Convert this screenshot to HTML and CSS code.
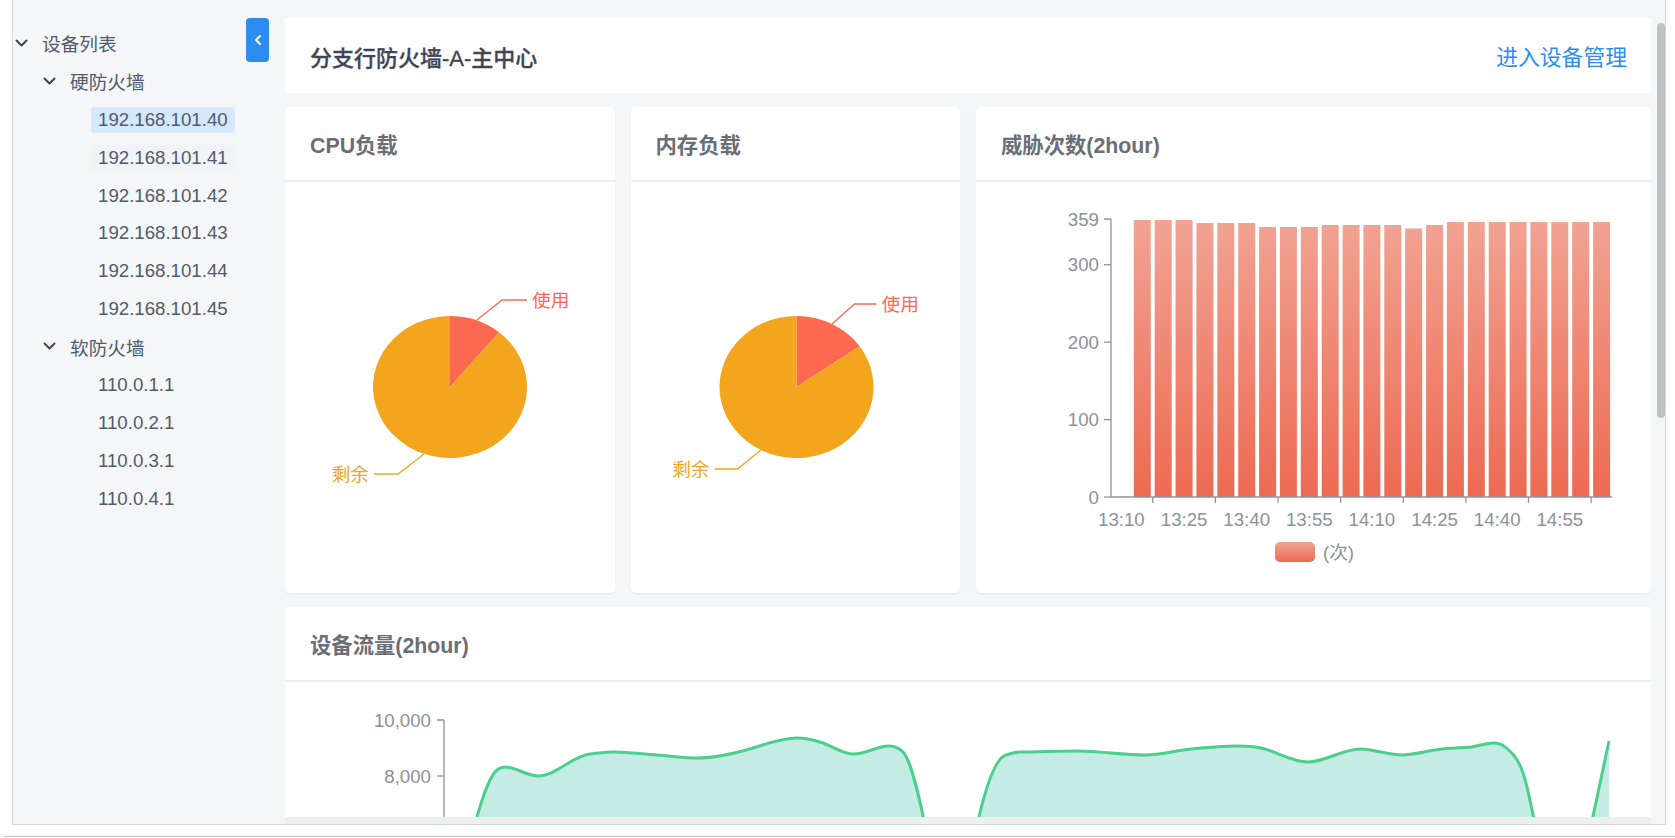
FILE: index.html
```html
<!DOCTYPE html>
<html lang="zh-CN">
<head>
<meta charset="utf-8">
<title>设备监控</title>
<link rel="stylesheet" href="styles.css">
</head>
<body>
<div class="frame">
  <aside class="sidebar">
    <button class="collapse" type="button" aria-label="收起">
      <svg width="8" height="12" viewBox="0 0 8 12"><polyline points="6,2 2,6 6,10"/></svg>
    </button>
    <ul class="tree">
      <li class="node lvl1"><svg class="arrow" viewBox="0 0 13 8"><polyline points="1.5,1.5 6.5,6.5 11.5,1.5"/></svg><span class="label">设备列表</span></li>
      <li class="node lvl2"><svg class="arrow" viewBox="0 0 13 8"><polyline points="1.5,1.5 6.5,6.5 11.5,1.5"/></svg><span class="label">硬防火墙</span></li>
      <li class="node lvl3 selected"><span class="label">192.168.101.40</span></li>
      <li class="node lvl3 hovered"><span class="label">192.168.101.41</span></li>
      <li class="node lvl3"><span class="label">192.168.101.42</span></li>
      <li class="node lvl3"><span class="label">192.168.101.43</span></li>
      <li class="node lvl3"><span class="label">192.168.101.44</span></li>
      <li class="node lvl3"><span class="label">192.168.101.45</span></li>
      <li class="node lvl2"><svg class="arrow" viewBox="0 0 13 8"><polyline points="1.5,1.5 6.5,6.5 11.5,1.5"/></svg><span class="label">软防火墙</span></li>
      <li class="node lvl3"><span class="label">110.0.1.1</span></li>
      <li class="node lvl3"><span class="label">110.0.2.1</span></li>
      <li class="node lvl3"><span class="label">110.0.3.1</span></li>
      <li class="node lvl3"><span class="label">110.0.4.1</span></li>
    </ul>
  </aside>

  <div class="main-col">
    <main class="main">
      <section class="card head-card">
        <h1 class="page-title">分支行防火墙-A-主中心</h1>
        <a class="manage-link" href="#">进入设备管理</a>
      </section>

      <div class="row2">
        <section class="card chart-card quarter">
          <header class="card-head">CPU负载</header>
          <div class="card-body">
            <svg class="chart" viewBox="285 182 329.5 411" preserveAspectRatio="none">
              <path class="slice-used" d="M450,387 L450,316 A77,71 0 0 1 499.1,332.3 Z"/>
              <path class="slice-free" d="M450,387 L499.1,332.3 A77,71 0 1 1 450,316 Z"/>
              <polyline class="lead-used" points="476.5,320.3 502,300 527,300"/>
              <text class="pie-label used" x="532" y="300">使用</text>
              <polyline class="lead-free" points="424,454 398,474 374,474"/>
              <text class="pie-label free" x="369" y="474" text-anchor="end">剩余</text>
            </svg>
          </div>
        </section>

        <section class="card chart-card quarter">
          <header class="card-head">内存负载</header>
          <div class="card-body">
            <svg class="chart" viewBox="630.5 182 329.5 411" preserveAspectRatio="none">
              <path class="slice-used" d="M796,387 L796,316 A77,71 0 0 1 859.1,346.3 Z"/>
              <path class="slice-free" d="M796,387 L859.1,346.3 A77,71 0 1 1 796,316 Z"/>
              <polyline class="lead-used" points="831.5,324 854,304 876,304"/>
              <text class="pie-label used" x="881" y="304">使用</text>
              <polyline class="lead-free" points="760.5,450 737,469 714,469"/>
              <text class="pie-label free" x="709" y="469" text-anchor="end">剩余</text>
            </svg>
          </div>
        </section>

        <section class="card chart-card half">
          <header class="card-head">威胁次数(2hour)</header>
          <div class="card-body">
            <svg class="chart" viewBox="976 182 675 411" preserveAspectRatio="none">
              <defs>
                <linearGradient id="barGrad" gradientUnits="userSpaceOnUse" x1="0" y1="219" x2="0" y2="497">
                  <stop offset="0" stop-color="#f1a394"/>
                  <stop offset="1" stop-color="#ed6a52"/>
                </linearGradient>
                <linearGradient id="legendGrad" x1="0" y1="0" x2="0" y2="1">
                  <stop offset="0" stop-color="#f1a394"/>
                  <stop offset="1" stop-color="#ed6a52"/>
                </linearGradient>
              </defs>
              <g class="bars">
                <rect x="1133.8" y="220" width="17" height="277"/>
                <rect x="1154.7" y="220" width="17" height="277"/>
                <rect x="1175.6" y="220" width="17" height="277"/>
                <rect x="1196.4" y="223" width="17" height="274"/>
                <rect x="1217.3" y="223" width="17" height="274"/>
                <rect x="1238.2" y="223" width="17" height="274"/>
                <rect x="1259.1" y="227" width="17" height="270"/>
                <rect x="1279.9" y="227" width="17" height="270"/>
                <rect x="1300.8" y="227" width="17" height="270"/>
                <rect x="1321.7" y="225" width="17" height="272"/>
                <rect x="1342.6" y="225" width="17" height="272"/>
                <rect x="1363.4" y="225" width="17" height="272"/>
                <rect x="1384.3" y="225" width="17" height="272"/>
                <rect x="1405.2" y="228.5" width="17" height="268.5"/>
                <rect x="1426.1" y="225" width="17" height="272"/>
                <rect x="1446.9" y="222" width="17" height="275"/>
                <rect x="1467.8" y="222" width="17" height="275"/>
                <rect x="1488.7" y="222" width="17" height="275"/>
                <rect x="1509.6" y="222" width="17" height="275"/>
                <rect x="1530.4" y="222" width="17" height="275"/>
                <rect x="1551.3" y="222" width="17" height="275"/>
                <rect x="1572.2" y="222" width="17" height="275"/>
                <rect x="1593.1" y="222" width="17" height="275"/>
              </g>
              <g class="axis">
                <line x1="1111" y1="219" x2="1111" y2="497"/>
                <line x1="1111" y1="497" x2="1612" y2="497"/>
                <line x1="1104" y1="219" x2="1111" y2="219"/>
                <line x1="1104" y1="264.7" x2="1111" y2="264.7"/>
                <line x1="1104" y1="342.1" x2="1111" y2="342.1"/>
                <line x1="1104" y1="419.6" x2="1111" y2="419.6"/>
                <line x1="1104" y1="497" x2="1111" y2="497"/>
                <line x1="1152.75" y1="497" x2="1152.75" y2="503"/>
                <line x1="1215.4" y1="497" x2="1215.4" y2="503"/>
                <line x1="1278" y1="497" x2="1278" y2="503"/>
                <line x1="1340.6" y1="497" x2="1340.6" y2="503"/>
                <line x1="1403.25" y1="497" x2="1403.25" y2="503"/>
                <line x1="1465.9" y1="497" x2="1465.9" y2="503"/>
                <line x1="1528.5" y1="497" x2="1528.5" y2="503"/>
                <line x1="1591.1" y1="497" x2="1591.1" y2="503"/>
              </g>
              <g class="axis-text" text-anchor="end">
                <text x="1099" y="219">359</text>
                <text x="1099" y="264.7">300</text>
                <text x="1099" y="342.1">200</text>
                <text x="1099" y="419.6">100</text>
                <text x="1099" y="497">0</text>
              </g>
              <g class="axis-text" text-anchor="middle">
                <text x="1121.4" y="519">13:10</text>
                <text x="1184.1" y="519">13:25</text>
                <text x="1246.7" y="519">13:40</text>
                <text x="1309.3" y="519">13:55</text>
                <text x="1371.9" y="519">14:10</text>
                <text x="1434.6" y="519">14:25</text>
                <text x="1497.2" y="519">14:40</text>
                <text x="1559.8" y="519">14:55</text>
              </g>
              <rect x="1275" y="542" width="40" height="20" rx="5" fill="url(#legendGrad)"/>
              <text class="axis-text" x="1323" y="552">(次)</text>
            </svg>
          </div>
        </section>
      </div>

      <section class="card chart-card flow-card">
        <header class="card-head">设备流量(2hour)</header>
        <div class="card-body">
          <svg class="chart flow-chart" viewBox="285 682 1366 400" preserveAspectRatio="none">
            <path class="area" d="M444,1000 L462,870 C473.7,829 485.3,779.4 497,770 C499.7,767.9 502.3,767 505,767 C516,767 527,776 538,776 C555.3,776 572.7,755.7 590,754 C598.3,753.2 606.7,752 615,752 C629,752 643,754.3 657,755 C670.3,755.7 683.7,758 697,758 C715.7,758 734.3,753.6 753,748 C767.7,743.6 782.3,738 797,738 C804.7,738 812.3,739.7 820,742 C831.3,745.4 842.7,754 854,754 C865.7,754 877.3,746 889,746 C893.7,746 898.3,747.3 903,752 C911.3,760.3 919.7,798.3 928,840 L940,1000 L962,1000 L974,840 C984.7,786.7 995.3,758.2 1006,755 C1010.7,753.6 1015.3,752 1020,752 C1039,752 1058,751 1077,751 C1099.7,751 1122.3,755 1145,755 C1160.3,755 1175.7,750.5 1191,749 C1206.3,747.5 1221.7,746 1237,746 C1246.3,746 1255.7,746.2 1265,749 C1279.3,753.3 1293.7,762 1308,762 C1325.3,762 1342.7,749 1360,749 C1374,749 1388,755 1402,755 C1415.3,755 1428.7,750.3 1442,749 C1451.7,748 1461.3,748 1471,747 C1478.3,746.3 1485.7,743 1493,743 C1497,743 1501.8,743.8 1505,747 C1510.7,751.5 1516.3,755.8 1522,770 C1528,785 1534,820 1540,850 L1550,1000 L1580,1000 L1588,840 L1609,741 L1609,1000 Z"/>
            <path class="line" d="M462,870 C473.7,829 485.3,779.4 497,770 C499.7,767.9 502.3,767 505,767 C516,767 527,776 538,776 C555.3,776 572.7,755.7 590,754 C598.3,753.2 606.7,752 615,752 C629,752 643,754.3 657,755 C670.3,755.7 683.7,758 697,758 C715.7,758 734.3,753.6 753,748 C767.7,743.6 782.3,738 797,738 C804.7,738 812.3,739.7 820,742 C831.3,745.4 842.7,754 854,754 C865.7,754 877.3,746 889,746 C893.7,746 898.3,747.3 903,752 C911.3,760.3 919.7,798.3 928,840 L940,1000 L962,1000 L974,840 C984.7,786.7 995.3,758.2 1006,755 C1010.7,753.6 1015.3,752 1020,752 C1039,752 1058,751 1077,751 C1099.7,751 1122.3,755 1145,755 C1160.3,755 1175.7,750.5 1191,749 C1206.3,747.5 1221.7,746 1237,746 C1246.3,746 1255.7,746.2 1265,749 C1279.3,753.3 1293.7,762 1308,762 C1325.3,762 1342.7,749 1360,749 C1374,749 1388,755 1402,755 C1415.3,755 1428.7,750.3 1442,749 C1451.7,748 1461.3,748 1471,747 C1478.3,746.3 1485.7,743 1493,743 C1497,743 1501.8,743.8 1505,747 C1510.7,751.5 1516.3,755.8 1522,770 C1528,785 1534,820 1540,850 L1550,1000 L1580,1000 L1588,840 L1609,741"/>
            <g class="axis">
              <line x1="444" y1="720" x2="444" y2="1000"/>
              <line x1="437" y1="720" x2="444" y2="720"/>
              <line x1="437" y1="776" x2="444" y2="776"/>
            </g>
            <g class="axis-text" text-anchor="end">
              <text x="431" y="720">10,000</text>
              <text x="431" y="776">8,000</text>
            </g>
          </svg>
        </div>
      </section>
    </main>
  </div>

  <div class="scrollbar"><div class="thumb"></div></div>
</div>
<div class="window-edge"></div>
</body>
</html>
```

FILE: styles.css
```css
* {
  box-sizing: border-box;
  margin: 0;
  padding: 0;
}

html, body {
  background: #ffffff;
}

body {
  width: 1675px;
  height: 838px;
  overflow: hidden;
  font-family: "Liberation Sans", "Noto Sans CJK SC", sans-serif;
  color: #515a6e;
}

.frame {
  display: flex;
  margin-left: 12px;
  width: 1654px;
  height: 825px;
  border: 1px solid #d5d7db;
  border-top: none;
}

/* ---------- sidebar ---------- */
.sidebar {
  position: relative;
  flex: none;
  width: 272px;
  background: #f5f6f8;
}

.collapse {
  position: absolute;
  left: 233px;
  top: 18px;
  width: 23px;
  height: 44px;
  border: none;
  border-radius: 4px;
  background: #2d8cf0;
  display: flex;
  align-items: center;
  justify-content: center;
  cursor: pointer;
}

.collapse polyline {
  fill: none;
  stroke: #ffffff;
  stroke-width: 2;
  stroke-linecap: round;
  stroke-linejoin: round;
}

.tree {
  list-style: none;
  padding: 24px 0 0 2px;
}

.node {
  height: 37.9px;
  display: flex;
  align-items: center;
  font-size: 18.67px;
  color: #515a6e;
  white-space: nowrap;
}

.arrow {
  width: 13px;
  height: 8px;
  margin-right: 14px;
  flex: none;
}

.arrow polyline {
  fill: none;
  stroke: #3f4656;
  stroke-width: 2;
  stroke-linecap: round;
  stroke-linejoin: round;
}

.lvl2 {
  padding-left: 28px;
}

.lvl3 {
  padding-left: 76px;
}

.lvl3 .label {
  height: 26px;
  line-height: 26px;
  padding: 0 7px;
  border-radius: 3px;
  transform: translateY(1px);
}

.selected .label {
  background: #d5e8fc;
}

.hovered .label {
  background: #f0f3f8;
}

/* ---------- main ---------- */
.main-col {
  flex: none;
  width: 1366px;
  background: #eeeff1;
}

.main {
  height: 817px;
  overflow: hidden;
  background: #f5f6f8;
  padding-top: 18px;
  display: flex;
  flex-direction: column;
  gap: 14px;
}

.card {
  background: #ffffff;
  flex: none;
}

.head-card {
  height: 75px;
  display: flex;
  align-items: center;
  justify-content: space-between;
  padding: 0 24px 0 25px;
}

.page-title {
  font-size: 22px;
  font-weight: 500;
  color: #3f4555;
  -webkit-text-stroke: 0.3px #3f4555;
}

.manage-link {
  font-size: 21.8px;
  color: #2d8cf0;
  text-decoration: none;
}

.row2 {
  flex: none;
  height: 486px;
  display: flex;
  gap: 16px;
}

.chart-card {
  border-radius: 5px;
  box-shadow: 0 1px 2px rgba(0, 0, 0, 0.06);
  display: flex;
  flex-direction: column;
  overflow: hidden;
}

.quarter {
  flex: 0 0 329.5px;
}

.half {
  flex: 1 1 auto;
}

.flow-card {
  height: 480px;
}

.card-head {
  flex: none;
  height: 75px;
  border-bottom: 2px solid #ebedf0;
  display: flex;
  align-items: center;
  padding-left: 25px;
  font-size: 21.33px;
  font-weight: bold;
  color: #6b6e76;
}

.card-body {
  flex: 1 1 auto;
  min-height: 0;
}

.chart {
  display: block;
  width: 100%;
  height: 100%;
}

.flow-chart {
  height: 400px;
}

/* pies */
.slice-used {
  fill: #fd6950;
}

.slice-free {
  fill: #f2a51d;
}

.lead-used,
.lead-free {
  fill: none;
  stroke-width: 1.3;
}

.lead-used {
  stroke: #fd6950;
}

.lead-free {
  stroke: #f2a51d;
}

.pie-label {
  font-size: 18.67px;
  dominant-baseline: central;
}

.pie-label.used {
  fill: #fd6950;
}

.pie-label.free {
  fill: #f2a51d;
}

/* axes */
.axis line {
  stroke: #8e939d;
  stroke-width: 1.3;
}

.axis-text,
.axis-text text {
  font-size: 18.67px;
  fill: #8c919b;
  dominant-baseline: central;
}

.bars rect {
  fill: url(#barGrad);
}

.area {
  fill: #c5ebe5;
}

.line {
  fill: none;
  stroke: #4ccf8c;
  stroke-width: 3;
  stroke-linejoin: round;
}

/* scrollbar */
.scrollbar {
  flex: none;
  width: 14px;
  background: #f5f6f8;
  padding: 23px 0 0 6px;
}

.thumb {
  width: 8px;
  height: 395px;
  background: #c1c1c1;
  border-radius: 4px;
}

.window-edge {
  margin: 11px 0 0 4px;
  height: 1px;
  background: #c4c4c4;
}
```
